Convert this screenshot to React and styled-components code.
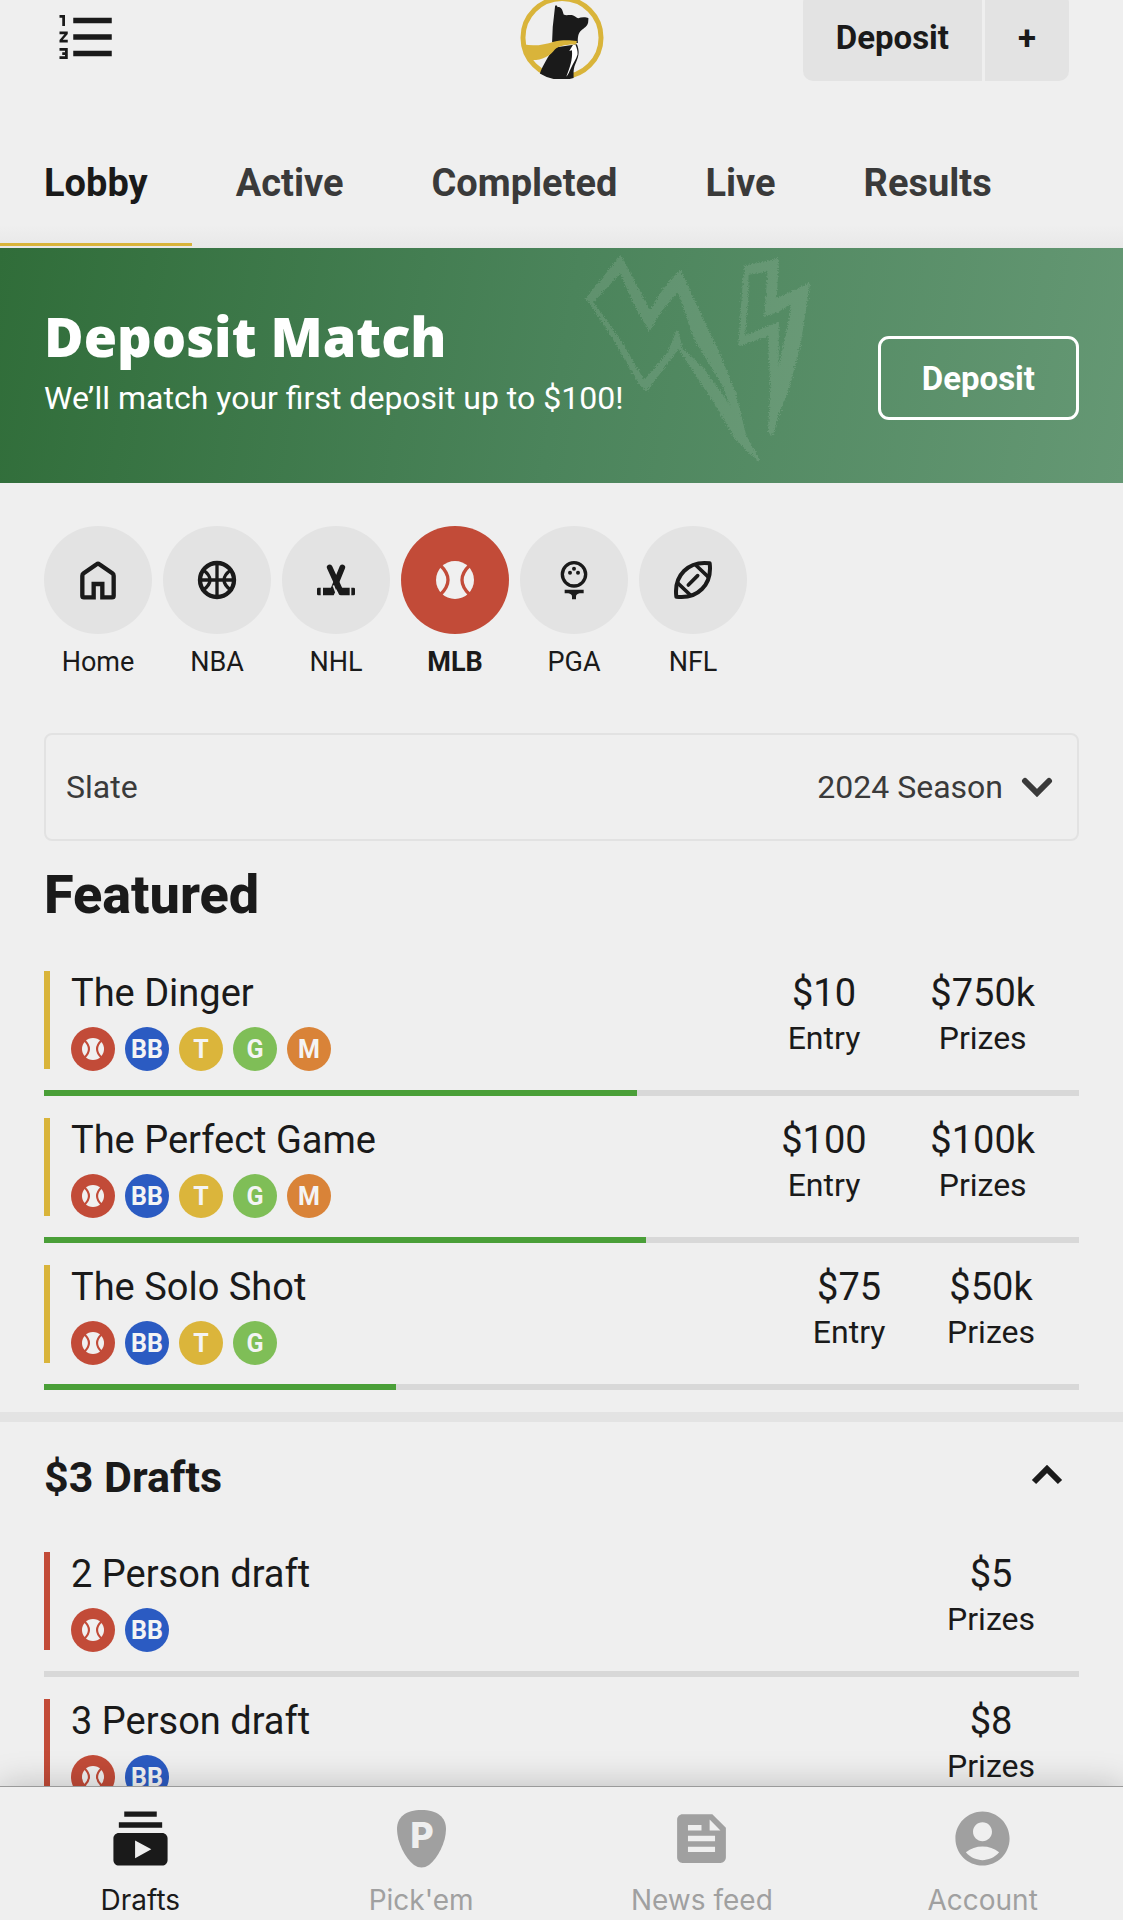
import { useState } from "react";
import styled, { createGlobalStyle } from "styled-components";
import {
  MdAccountCircle,
  MdFeed,
  MdFormatListNumbered,
  MdSubscriptions,
} from "react-icons/md";

const GlobalStyle = createGlobalStyle`
  * {
    box-sizing: border-box;
  }

  body {
    margin: 0;
    background: #efefef;
    color: #1a1a1a;
    font-family: Roboto, "Liberation Sans", sans-serif;
  }

  button,
  select {
    font: inherit;
    color: inherit;
    border: none;
    background: none;
    padding: 0;
    cursor: pointer;
  }
`;

const AppDiv = styled.div`
  height: 100vh;
  display: flex;
  flex-direction: column;
`;

const MainStyled = styled.main`
  flex: 1;
  min-height: 0;
  overflow-y: auto;
  scrollbar-width: none;
`;

/* header */

const HeaderStyled = styled.header`
  height: 88px;
  margin-top: -7px;
  margin-bottom: 39px;
  padding: 0 54px;
  display: grid;
  grid-template-columns: 1fr auto 1fr;
  align-items: center;
`;

const IconButton = styled.button`
  display: flex;
  justify-self: start;
`;

const DepositGroup = styled.div`
  display: flex;
  gap: 3px;
  height: 100%;
  justify-self: end;
  border-radius: 10px;
  overflow: hidden;
`;

const DepositButton = styled.button`
  padding: 0 33px;
  background: #e3e3e3;
  font-size: 33px;
  font-weight: 700;
`;

const TabsNav = styled.nav`
  display: flex;
  padding-bottom: 2px;
  background: linear-gradient(#efefef 82%, #e8e8e8);
`;

const TabLink = styled.a`
  height: 126px;
  padding: 0 44px;
  border-top: 3px solid transparent;
  border-bottom: 3px solid ${(props) => (props.$active ? "#d9b43a" : "transparent")};
  color: ${(props) => (props.$active ? "#1a1a1a" : "#3a3a3a")};
  font-size: 38px;
  font-weight: 700;
  line-height: 120px;
  text-decoration: none;
`;

/* promo banner */

const BannerSection = styled.section`
  position: relative;
  min-height: 235px;
  padding: 25px 44px 0;
  display: flex;
  align-items: center;
  justify-content: space-between;
  background: linear-gradient(100deg, #306d39 0%, #4b845b 50%, #659874 100%);
  color: #ffffff;
`;

const BoltsSvg = styled.svg`
  position: absolute;
  top: 0;
  right: 311px;
  width: 230px;
  height: 234px;
`;

const BannerText = styled.div`
  position: relative;
  padding-bottom: 24px;
`;

const BannerTitle = styled.h2`
  margin: 0 0 4px;
  font-family: "Open Sans", Roboto, sans-serif;
  font-size: 54px;
  font-weight: 800;
  line-height: 60px;
`;

const BannerCopy = styled.p`
  margin: 0;
  font-size: 32px;
  line-height: 56px;
`;

const OutlineButton = styled.button`
  height: 84px;
  padding: 0 41px;
  border: 3px solid #ffffff;
  border-radius: 11px;
  font-size: 33px;
  font-weight: 700;
`;

/* sport picker */

const SportsNav = styled.nav`
  display: flex;
  gap: 11px;
  padding: 43px 44px 51px;
`;

const SportButton = styled.button`
  width: 108px;
  display: flex;
  flex-direction: column;
  align-items: center;
  gap: 8px;
  font-size: 27px;
  font-weight: ${(props) => (props.$active ? 700 : 400)};
  line-height: 40px;
`;

const SportCircle = styled.span`
  width: 108px;
  height: 108px;
  border-radius: 50%;
  display: grid;
  place-items: center;
  background: ${(props) => (props.$active ? "#c24b38" : "#e3e3e3")};
`;

/* slate */

const SlateBox = styled.div`
  height: 108px;
  margin: 0 44px;
  padding: 0 24px 0 20px;
  display: flex;
  align-items: center;
  gap: 18px;
  border: 2px solid #e2e2e2;
  border-radius: 8px;
  color: #3a3a3a;
  font-size: 32px;
`;

const SlateSelect = styled.select`
  flex: 1;
  height: 100%;
  appearance: none;
  text-align: right;
  text-align-last: right;
`;

/* contests */

const FeaturedSection = styled.section`
  padding: 22px 44px;
`;

const FeaturedTitle = styled.h1`
  margin: 0 0 44px;
  font-size: 54px;
  font-weight: 800;
  line-height: 64px;
`;

const DraftsSection = styled.section`
  padding: 22px 44px;
  border-top: 10px solid #e3e3e3;
`;

const DraftsHeader = styled.div`
  display: flex;
  align-items: center;
  justify-content: space-between;
  padding-right: 16px;
  margin-bottom: 42px;
`;

const DraftsTitle = styled.h2`
  margin: 0;
  font-size: 43px;
  font-weight: 700;
  line-height: 66px;
`;

const ContestList = styled.ul`
  margin: 0;
  padding: 0;
  list-style: none;
`;

const ContestItem = styled.li`
  padding-top: ${(props) => (props.$first ? "0" : "22px")};
`;

const ContestRow = styled.div`
  display: flex;
  justify-content: space-between;
  padding: 0 44px 19px 0;
`;

const ContestInfo = styled.div`
  display: flex;
  gap: 21px;
`;

const Accent = styled.div`
  width: 6px;
  height: 98px;
  background: ${(props) => props.$color};
`;

const ContestName = styled.div`
  height: 56px;
  font-size: 38px;
  line-height: 44px;
`;

const BadgeRow = styled.div`
  display: flex;
  gap: 10px;
`;

const Badge = styled.span`
  width: 44px;
  height: 44px;
  border-radius: 50%;
  display: grid;
  place-items: center;
  background: ${(props) => props.$color};
  color: #f4f4f4;
  font-size: 25px;
  font-weight: 700;
`;

const StatGrid = styled.div`
  display: grid;
  grid-auto-flow: column;
  grid-auto-columns: 1fr;
  column-gap: 54px;
`;

const Stat = styled.div`
  text-align: center;
  font-size: 32px;
  line-height: 46px;
`;

const StatValue = styled.div`
  font-size: 38px;
  line-height: 44px;
`;

const Track = styled.div`
  height: 6px;
  background: #d8d8d8;
`;

const Fill = styled.div`
  height: 100%;
  background: #4a9f38;
`;

/* bottom bar */

const BottomNav = styled.nav`
  position: relative;
  display: grid;
  grid-template-columns: repeat(4, 1fr);
  min-height: 134px;
  padding-top: 19px;
  border-top: 1px solid #9a9a9a;
  background: #efefef;
  box-shadow: 0 0 32px rgba(0, 0, 0, 0.22);
`;

const BottomLink = styled.a`
  display: flex;
  flex-direction: column;
  align-items: center;
  gap: 12px;
  color: ${(props) => (props.$active ? "#1a1a1a" : "#a0a0a0")};
  font-family: Inter, Roboto, sans-serif;
  font-size: 28px;
  line-height: 34px;
  text-decoration: none;
`;

const BADGES = {
  BB: "#2b5bc2",
  T: "#dbb53b",
  G: "#7fbe57",
  M: "#d98338",
};

const TABS = ["Lobby", "Active", "Completed", "Live", "Results"];

const FEATURED = [
  { name: "The Dinger", badges: ["BB", "T", "G", "M"], entry: "$10", prizes: "$750k", filled: 57.3 },
  { name: "The Perfect Game", badges: ["BB", "T", "G", "M"], entry: "$100", prizes: "$100k", filled: 58.2 },
  { name: "The Solo Shot", badges: ["BB", "T", "G"], entry: "$75", prizes: "$50k", filled: 34 },
];

const DRAFTS = [
  { name: "2 Person draft", badges: ["BB"], prizes: "$5" },
  { name: "3 Person draft", badges: ["BB"], prizes: "$8" },
];

const Baseball = ({ size = 38, seam = 9 }) => (
  <svg width={size} height={size} viewBox="3 3 114 114" fill="none" aria-hidden="true">
    <circle cx="60" cy="60" r="57" fill="#f0f0f0" />
    <path
      d="M15 15Q63 60 15 105M105 15Q57 60 105 105"
      stroke="#c24b38"
      strokeWidth={seam}
    />
  </svg>
);

const SportIcon = ({ children }) => (
  <svg
    width="40"
    height="40"
    viewBox="0 0 120 120"
    fill="none"
    stroke="#1a1a1a"
    strokeWidth="13"
    aria-hidden="true"
  >
    {children}
  </svg>
);

const HomeIcon = () => (
  <SportIcon>
    <path d="M47 112H18q-5 0-5-5V47q0-4 4-7L56 13q4-3 8 0l39 27q4 3 4 7v60q0 5-5 5H73V72H47z" />
  </SportIcon>
);

const BasketballIcon = () => (
  <SportIcon>
    <circle cx="60" cy="60" r="51" />
    <path d="M60 9v102M9 60h102" strokeWidth="10" />
    <path d="M19 30Q59 60 19 90M101 30Q61 60 101 90" strokeWidth="10" />
  </SportIcon>
);

const HockeyIcon = () => (
  <SportIcon>
    <path d="M79 22L52 88" strokeWidth="17" strokeLinecap="round" />
    <path d="M21 83h29l4-8 5 18-6 13H21z" fill="#1a1a1a" stroke="none" />
    <path d="M14 83v23H7q-4 0-4-4V87q0-4 4-4z" fill="#1a1a1a" stroke="none" />
    <path d="M52 76l13 34" stroke="#e3e3e3" strokeWidth="5" />
    <path d="M41 22l31 68" strokeWidth="17" strokeLinecap="round" />
    <path d="M62 83h39v23H75q-5 0-7-4z" fill="#1a1a1a" stroke="none" />
    <path d="M106 83h7q4 0 4 4v15q0 4-4 4h-7z" fill="#1a1a1a" stroke="none" />
  </SportIcon>
);

const GolfIcon = () => (
  <SportIcon>
    <circle cx="60" cy="43" r="35" strokeWidth="10" />
    <g fill="#1a1a1a" stroke="none">
      <circle cx="48" cy="38" r="6" />
      <circle cx="72" cy="38" r="6" />
      <circle cx="60" cy="26" r="6" />
      <path d="M32 89h57v11H77q-11 2-11 10v8H54v-8q0-8-11-10H32z" />
    </g>
  </SportIcon>
);

const FootballIcon = () => (
  <SportIcon>
    <path
      d="M110 10C46 2 2 46 10 110C74 118 118 74 110 10z"
      strokeWidth="12"
      strokeLinejoin="round"
    />
    <path d="M68 15l40 38M12 67l40 38" strokeWidth="11" />
    <path d="M46 75l28-28" strokeWidth="11" strokeLinecap="round" />
  </SportIcon>
);

const SPORTS = [
  { name: "Home", icon: <HomeIcon /> },
  { name: "NBA", icon: <BasketballIcon /> },
  { name: "NHL", icon: <HockeyIcon /> },
  { name: "MLB", icon: <Baseball seam={10} /> },
  { name: "PGA", icon: <GolfIcon /> },
  { name: "NFL", icon: <FootballIcon /> },
];

const Logo = () => (
  <svg width="84" height="84" viewBox="56 -17 254 254" role="img" aria-label="Underdog">
    <circle cx="183" cy="112" r="118" fill="none" stroke="#d9b43a" strokeWidth="15" />
    <path
      d="M153 126L155 80L162 17C164 11 168 14 170 20C176 18 183 24 185 32L188 42C196 47 207 41 217 45C224 47 226 52 232 53C242 49 256 49 263 53L262 66C260 77 250 83 241 90C232 98 230 110 231 128z"
      fill="#1a1a1a"
    />
    <path
      d="M162 142C140 168 126 196 116 220A127 127 0 0 0 218 234C218 215 217 206 224 190C235 166 236 152 228 132z"
      fill="#1a1a1a"
    />
    <path
      d="M216 134L205 152L213 150C216 178 206 204 196 230C202 224 205 214 211 202C216 190 226 178 230 163C231 153 228 143 224 134z"
      fill="#fff"
    />
    <path
      d="M66 132C100 139 130 133 158 124C185 118 210 120 228 122L226 132C200 133 177 135 162 147C144 172 116 183 80 179z"
      fill="#d9b43a"
    />
  </svg>
);

const Bolts = () => (
  <BoltsSvg viewBox="60 25 640 703" preserveAspectRatio="none" aria-hidden="true">
    <filter id="chalk">
      <feTurbulence type="fractalNoise" baseFrequency="0.25" numOctaves="2" />
      <feDisplacementMap
        in="SourceGraphic"
        scale="16"
        xChannelSelector="R"
        yChannelSelector="G"
      />
    </filter>
    <g
      fill="#ffffff"
      stroke="#ffffff"
      strokeWidth="5"
      strokeLinejoin="round"
      opacity="0.11"
      filter="url(#chalk)"
    >
      <path d="M72 178L168 50L172 92L85 192z" />
      <path d="M168 50L250 218L247 272L205 190L160 80z" />
      <path d="M247 222Q290 135 333 95L337 145Q285 195 247 272z" />
      <path d="M333 95L385 215L440 340L485 460L515 590L552 663L500 575L455 440L375 300L322 135z" />
      <path d="M552 663L490 600L430 490L375 400L320 310L325 275L335 325L395 385L465 490L515 590z" />
      <path d="M325 275L335 315L240 452L228 432L300 340z" />
      <path d="M85 192L92 192L170 310L240 440L236 450L222 435L155 310z" />
      <path d="M513 80L605 60L600 88L515 105z" />
      <path d="M512 100L521 100L520 180L510 305L498 315L505 200z" />
      <path d="M498 317L500 298L605 250L602 278z" />
      <path d="M580 80L605 60L599 188L570 228z" />
      <path d="M570 228L585 188L692 132L665 175L605 215z" />
      <path d="M692 132L665 320L630 460L605 525L590 585L580 580L586 450L606 400L636 250L648 170z" />
      <path d="M605 250L605 400L612 460L588 470L578 270z" />
    </g>
  </BoltsSvg>
);

const Chevron = ({ up }) => (
  <svg width="32" height="20" viewBox="0 0 32 20" fill="none" aria-hidden="true">
    <path
      d={up ? "M3 17L16 4l13 13" : "M4 4l12 12L28 4"}
      stroke={up ? "#1a1a1a" : "#3a3a3a"}
      strokeWidth="6"
      strokeLinecap={up ? "butt" : "round"}
    />
  </svg>
);

const PickIcon = () => (
  <svg width="65" height="65" viewBox="0 0 65 65" aria-hidden="true">
    <path
      d="M32.500 4C48 4 57 11 57 23C57 36 49 52 40 59Q32.500 64 25 59C16 52 8 36 8 23C8 11 17 4 32.500 4z"
      fill="currentColor"
    />
    <text
      x="33"
      y="42"
      fill="#efefef"
      fontFamily="Inter, sans-serif"
      fontSize="36"
      fontWeight="800"
      textAnchor="middle"
    >
      P
    </text>
  </svg>
);

const BOTTOM_LINKS = [
  { name: "Drafts", icon: <MdSubscriptions size={65} />, active: true },
  { name: "Pick'em", icon: <PickIcon /> },
  { name: "News feed", icon: <MdFeed size={65} /> },
  { name: "Account", icon: <MdAccountCircle size={65} /> },
];

const Contest = ({ contest, color, first }) => (
  <ContestItem $first={first}>
    <ContestRow>
      <ContestInfo>
        <Accent $color={color} />
        <div>
          <ContestName>{contest.name}</ContestName>
          <BadgeRow>
            <Badge $color="#c24b38">
              <Baseball size={22} seam={11} />
            </Badge>
            {contest.badges.map((badge) => (
              <Badge key={badge} $color={BADGES[badge]}>
                {badge}
              </Badge>
            ))}
          </BadgeRow>
        </div>
      </ContestInfo>
      <StatGrid>
        {contest.entry && (
          <Stat>
            <StatValue>{contest.entry}</StatValue>
            Entry
          </Stat>
        )}
        <Stat>
          <StatValue>{contest.prizes}</StatValue>
          Prizes
        </Stat>
      </StatGrid>
    </ContestRow>
    <Track>
      {contest.filled && <Fill style={{ width: `${contest.filled}%` }} />}
    </Track>
  </ContestItem>
);

const App = () => {
  const [sport, setSport] = useState("MLB");
  const [open, setOpen] = useState(true);

  return (
    <AppDiv>
      <GlobalStyle />
      <MainStyled>
        <HeaderStyled>
          <IconButton aria-label="Rankings">
            <MdFormatListNumbered size={66} />
          </IconButton>
          <Logo />
          <DepositGroup>
            <DepositButton>Deposit</DepositButton>
            <DepositButton>+</DepositButton>
          </DepositGroup>
        </HeaderStyled>
        <TabsNav>
          {TABS.map((tab) => (
            <TabLink key={tab} href="#" $active={tab === "Lobby"}>
              {tab}
            </TabLink>
          ))}
        </TabsNav>
        <BannerSection>
          <Bolts />
          <BannerText>
            <BannerTitle>Deposit Match</BannerTitle>
            <BannerCopy>We’ll match your first deposit up to $100!</BannerCopy>
          </BannerText>
          <OutlineButton>Deposit</OutlineButton>
        </BannerSection>
        <SportsNav>
          {SPORTS.map(({ name, icon }) => (
            <SportButton key={name} $active={name === sport} onClick={() => setSport(name)}>
              <SportCircle $active={name === sport}>{icon}</SportCircle>
              {name}
            </SportButton>
          ))}
        </SportsNav>
        <SlateBox>
          <label htmlFor="slate">Slate</label>
          <SlateSelect id="slate">
            <option>2024 Season</option>
          </SlateSelect>
          <Chevron />
        </SlateBox>
        <FeaturedSection>
          <FeaturedTitle>Featured</FeaturedTitle>
          <ContestList>
            {FEATURED.map((contest, i) => (
              <Contest key={contest.name} contest={contest} color="#d9b43a" first={i === 0} />
            ))}
          </ContestList>
        </FeaturedSection>
        <DraftsSection>
          <DraftsHeader>
            <DraftsTitle>$3 Drafts</DraftsTitle>
            <button aria-label="Toggle $3 drafts" onClick={() => setOpen(!open)}>
              <Chevron up={open} />
            </button>
          </DraftsHeader>
          {open && (
            <ContestList>
              {DRAFTS.map((contest, i) => (
                <Contest key={contest.name} contest={contest} color="#c24b38" first={i === 0} />
              ))}
            </ContestList>
          )}
        </DraftsSection>
      </MainStyled>
      <BottomNav>
        {BOTTOM_LINKS.map(({ name, icon, active }) => (
          <BottomLink key={name} href="#" $active={active}>
            {icon}
            {name}
          </BottomLink>
        ))}
      </BottomNav>
    </AppDiv>
  );
};

export default App;
